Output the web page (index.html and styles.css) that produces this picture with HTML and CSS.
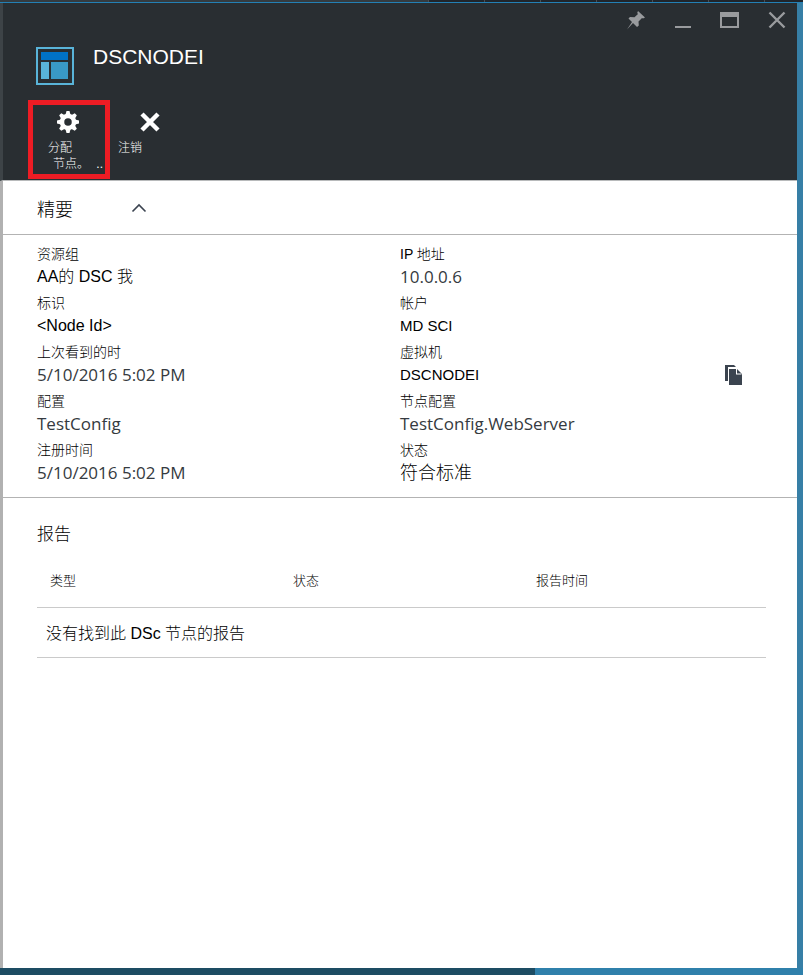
FILE: index.html
```html
<!DOCTYPE html>
<html lang="zh-CN">
<head>
<meta charset="utf-8">
<meta name="viewport" content="width=device-width, initial-scale=1">
<title>DSCNODEI</title>
<link rel="stylesheet" href="styles.css">
</head>
<body>
<div class="topstrip"></div>
<main class="blade">
  <header class="header">
    <div class="window-controls">
      <button type="button" aria-label="固定"><svg width="20" height="20" viewBox="0 0 20 20"><path fill="#999b9e" d="M12 1l7 6.500-2 1-1-.5-3.500 3.500 .3 4-1.800 1.500-4-4L1 19.500l5-7.500-3.500-3.500L4 7l4.500 .2L12 4l-.8-1z"/></svg></button>
      <button type="button" aria-label="最小化"><svg width="20" height="20" viewBox="0 0 20 20"><path fill="#999b9e" d="M2 16h16v2H2z"/></svg></button>
      <button type="button" aria-label="最大化"><svg width="20" height="20" viewBox="0 0 20 20"><path fill="#999b9e" fill-rule="evenodd" d="M0 2h19v16H0zM2 7v9h15V7z"/></svg></button>
      <button type="button" aria-label="关闭"><svg width="20" height="20" viewBox="0 0 20 20"><path stroke="#999b9e" stroke-width="2.400" d="M2.500 2.500l15 15M17.500 2.500l-15 15"/></svg></button>
    </div>
    <div class="title">
      <svg width="40" height="40" viewBox="0 0 40 40"><path fill="none" stroke="#59b4d9" stroke-width="2" d="M2 2h36v36H2z"/><path fill="#0072c6" d="M6 6h27v8H6z"/><path fill="#59b4d9" d="M6 16h8v17H6z"/><path fill="#3999c6" d="M16 16h17v17H16z"/></svg>
      <h1>DSCNODEI</h1>
    </div>
    <div class="toolbar">
      <button type="button" class="tool assign">
        <svg width="22" height="22" viewBox="-11 -11 22 22"><g fill="#fff"><path id="tooth" d="M-2.600-7L-1.500-11h3L2.600-7z"/><use href="#tooth" transform="rotate(45)"/><use href="#tooth" transform="rotate(90)"/><use href="#tooth" transform="rotate(135)"/><use href="#tooth" transform="rotate(180)"/><use href="#tooth" transform="rotate(225)"/><use href="#tooth" transform="rotate(270)"/><use href="#tooth" transform="rotate(315)"/></g><circle r="6" fill="none" stroke="#fff" stroke-width="4.500"/></svg>
        <span>分配</span>
        <span class="second"><span>节点。</span><span>..</span></span>
      </button>
      <button type="button" class="tool">
        <svg width="22" height="22" viewBox="0 0 22 22"><path stroke="#fff" stroke-width="4.500" d="M3 3l16 16M19 3L3 19"/></svg>
        <span>注销</span>
      </button>
    </div>
  </header>

  <section>
    <div class="essentials-head">
      <h2>精要</h2>
      <button type="button" aria-label="折叠"><svg width="16" height="10" viewBox="0 0 16 10"><path fill="none" stroke="#3b4350" stroke-width="1.600" d="M1.500 8.500L8 2l6.500 6.500"/></svg></button>
    </div>
    <div class="essentials">
      <dl>
        <div><dt>资源组</dt><dd class="medium">AA的 DSC 我</dd></div>
        <div><dt>标识</dt><dd class="medium">&lt;Node Id&gt;</dd></div>
        <div><dt>上次看到的时</dt><dd class="humanist">5/10/2016 5:02 PM</dd></div>
        <div><dt>配置</dt><dd class="humanist">TestConfig</dd></div>
        <div><dt>注册时间</dt><dd class="humanist">5/10/2016 5:02 PM</dd></div>
      </dl>
      <dl>
        <div><dt>IP 地址</dt><dd class="humanist">10.0.0.6</dd></div>
        <div><dt>帐户</dt><dd>MD SCI</dd></div>
        <div><dt>虚拟机</dt><dd class="copyable">DSCNODEI
          <button type="button" aria-label="复制"><svg width="18" height="20" viewBox="0 0 18 20"><path fill="#3b444f" d="M0 0h9l2 2H3v14H0z"/><path fill="#3b444f" d="M4 4h8l5 5v11H4z"/><path fill="#fff" d="M11 4h1v4.500h4.500v1H11z"/></svg></button></dd></div>
        <div><dt>节点配置</dt><dd class="humanist">TestConfig.WebServer</dd></div>
        <div><dt>状态</dt><dd class="large">符合标准</dd></div>
      </dl>
    </div>
  </section>

  <section class="reports">
    <h2>报告</h2>
    <table>
      <thead><tr><th scope="col">类型</th><th scope="col">状态</th><th scope="col">报告时间</th></tr></thead>
      <tbody><tr><td colspan="3">没有找到此 DSc 节点的报告</td></tr></tbody>
    </table>
  </section>
</main>
<div class="bottomstrip"></div>
</body>
</html>
```
FILE: styles.css
```css
* { box-sizing: border-box; }

body {
  margin: 0;
  min-height: 100vh;
  display: flex;
  flex-direction: column;
  background: #377fa6;
  color: #000;
  font-family: "Liberation Sans", "Noto Sans CJK SC", sans-serif;
  font-size: 15px;
  font-weight: 300;
}

h1, h2, dl, dd { margin: 0; font-weight: 300; }

button {
  padding: 0;
  border: 0;
  background: none;
  color: inherit;
  font: inherit;
  text-align: left;
}

svg { display: block; }

.topstrip {
  height: 3px;
  border-bottom: 1px solid #2380b5;
  background:
    linear-gradient(#343b40, #343b40) 0 0 / 428px 100% no-repeat,
    repeating-linear-gradient(90deg, #4b4f53 0 1px, #20252b 1px 56px) 428px 0;
}

.blade {
  flex: 1;
  margin-right: 6px;
  border-left: 3px solid #b1b1b1;
  background: #fff;
}

.header {
  margin-left: -3px;
  border-left: 3px solid #3d4347;
  border-bottom: 1px solid #b8babb;
  background: #292e32;
  color: #fff;
}

.window-controls {
  display: flex;
  justify-content: flex-end;
  gap: 27px;
  padding: 7px 10px 0 0;
}

.title {
  display: flex;
  gap: 18px;
  padding: 16px 0 0 32px;
}

.title h1 {
  font-size: 21px;
  line-height: 22px;
}

.title svg { margin-bottom: 14px; }

.toolbar {
  display: flex;
  gap: 8px;
  padding: 0 0 1px 25px;
}

.tool {
  display: flex;
  flex-direction: column;
  padding-top: 11px;
  font-size: 12px;
  line-height: 16px;
}

.tool svg { margin: 0 0 7px 21px; }

.assign {
  width: 82px;
  height: 79px;
  padding: 6px 2px 0 15px;
  border: 5px solid #ed1c24;
}

.assign svg { margin-left: 9px; }

.second {
  display: flex;
  justify-content: space-between;
  padding-left: 5px;
}

.essentials-head {
  display: flex;
  align-items: center;
  gap: 58px;
  height: 54px;
  padding-left: 34px;
  border-bottom: 1px solid #b3b3b3;
}

.essentials-head h2 { font-size: 18px; }

.essentials {
  display: grid;
  grid-template-columns: 1fr 1fr;
  padding: 9px 34px 8px;
  border-bottom: 1px solid #b3b3b3;
}

.essentials dl > div { padding-bottom: 3px; }

dt {
  font-size: 14px;
  line-height: 20px;
}

dd {
  font-size: 15px;
  line-height: 26px;
}

.medium { font-size: 16px; }

.humanist {
  color: #353a40;
  font-family: "Open Sans", "Noto Sans CJK SC", sans-serif;
  font-size: 17px;
  font-weight: 400;
}

.large { font-size: 18px; }

.copyable {
  display: flex;
  align-items: center;
  justify-content: space-between;
  padding-right: 20px;
}

.reports { padding: 24px 31px 0 34px; }

.reports h2 {
  font-size: 17px;
  line-height: 26px;
}

table {
  width: 100%;
  border-collapse: collapse;
  table-layout: fixed;
}

th {
  height: 59px;
  padding: 4px 13px 0;
  border-bottom: 1px solid #cacaca;
  font-size: 13px;
  font-weight: 300;
  text-align: left;
}

td {
  height: 50px;
  padding: 0 9px;
  border-bottom: 1px solid #cacaca;
  font-size: 16px;
}

.bottomstrip {
  height: 7px;
  background: linear-gradient(90deg, #1d4c63 66.6%, #2f80ab 66.6%);
}
```
